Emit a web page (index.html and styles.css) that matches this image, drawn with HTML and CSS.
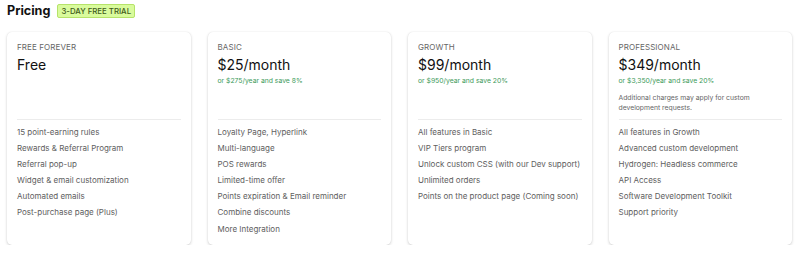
FILE: index.html
```html
<!DOCTYPE html>
<html>
<head>
<meta charset="utf-8">
<link rel="stylesheet" href="styles.css">
</head>
<body>
<div class="page">
  <div class="header">
    <h1 class="title">Pricing</h1>
    <span class="badge">3-DAY FREE TRIAL</span>
  </div>
  <div class="plans">
    <div class="card">
      <div class="head">
        <div class="label">FREE FOREVER</div>
        <div class="price">Free</div>
      </div>
      <hr class="divider">
      <ul class="features">
        <li>15 point-earning rules</li>
        <li>Rewards &amp; Referral Program</li>
        <li>Referral pop-up</li>
        <li>Widget &amp; email customization</li>
        <li>Automated emails</li>
        <li>Post-purchase page (Plus)</li>
      </ul>
    </div>
    <div class="card">
      <div class="head">
        <div class="label">BASIC</div>
        <div class="price">$25/month</div>
        <div class="save">or $275/year and save 8%</div>
      </div>
      <hr class="divider">
      <ul class="features">
        <li>Loyalty Page, Hyperlink</li>
        <li>Multi-language</li>
        <li>POS rewards</li>
        <li>Limited-time offer</li>
        <li>Points expiration &amp; Email reminder</li>
        <li>Combine discounts</li>
        <li>More Integration</li>
      </ul>
    </div>
    <div class="card">
      <div class="head">
        <div class="label">GROWTH</div>
        <div class="price">$99/month</div>
        <div class="save">or $950/year and save 20%</div>
      </div>
      <hr class="divider">
      <ul class="features">
        <li>All features in Basic</li>
        <li>VIP Tiers program</li>
        <li>Unlock custom CSS (with our Dev support)</li>
        <li>Unlimited orders</li>
        <li>Points on the product page (Coming soon)</li>
      </ul>
    </div>
    <div class="card">
      <div class="head">
        <div class="label">PROFESSIONAL</div>
        <div class="price">$349/month</div>
        <div class="save">or $3,350/year and save 20%</div>
        <div class="note">Additional charges may apply for custom development requests.</div>
      </div>
      <hr class="divider">
      <ul class="features">
        <li>All features in Growth</li>
        <li>Advanced custom development</li>
        <li>Hydrogen: Headless commerce</li>
        <li>API Access</li>
        <li>Software Development Toolkit</li>
        <li>Support priority</li>
      </ul>
    </div>
  </div>
</div>
</body>
</html>
```
FILE: styles.css
```css
* { box-sizing: border-box; }
html, body { margin: 0; padding: 0; background: #fff; }
body { font-family: Inter, "Noto Sans", sans-serif; color: #111; }
.page { padding: 3px 8px 0 7px; }
.header { display: flex; align-items: center; gap: 7px; height: 16px; }
.title { margin: 0; font-size: 12.6px; font-weight: 700; line-height: 16px; color: #111; }
.badge {
  font-size: 7.8px; font-weight: 500; color: #3f5a1a; background: #d9fb9c;
  border: 1px solid #b6e36a; border-radius: 2px; padding: 1px 3px; line-height: 10.5px;
}
.plans {
  display: grid; grid-template-columns: repeat(4, 1fr); gap: 17px;
  margin-top: 13px;
}
.card {
  background: #fff; border-radius: 5px;
  box-shadow: 0 1px 3px rgba(0,0,0,0.18), 0 0 1px rgba(0,0,0,0.1);
  padding: 9px 10px 10px;
  height: 213px;
}
.head { height: 72px; }
.label { font-size: 8px; line-height: 12px; color: #666; letter-spacing: 0.1px; }
.price { font-size: 14px; line-height: 18px; margin-top: 3px; color: #111; }
.save { font-size: 6.8px; line-height: 10px; margin-top: 2px; color: #3c9a5a; }
.note { font-size: 6.8px; line-height: 9.5px; margin-top: 7px; color: #666; }
.divider { border: 0; border-top: 1px solid #ececec; margin: 6px 0 4px; }
.features { list-style: none; margin: 0; padding: 0; }
.features li { font-size: 8px; line-height: 16.1px; color: #606060; white-space: nowrap; }
```
